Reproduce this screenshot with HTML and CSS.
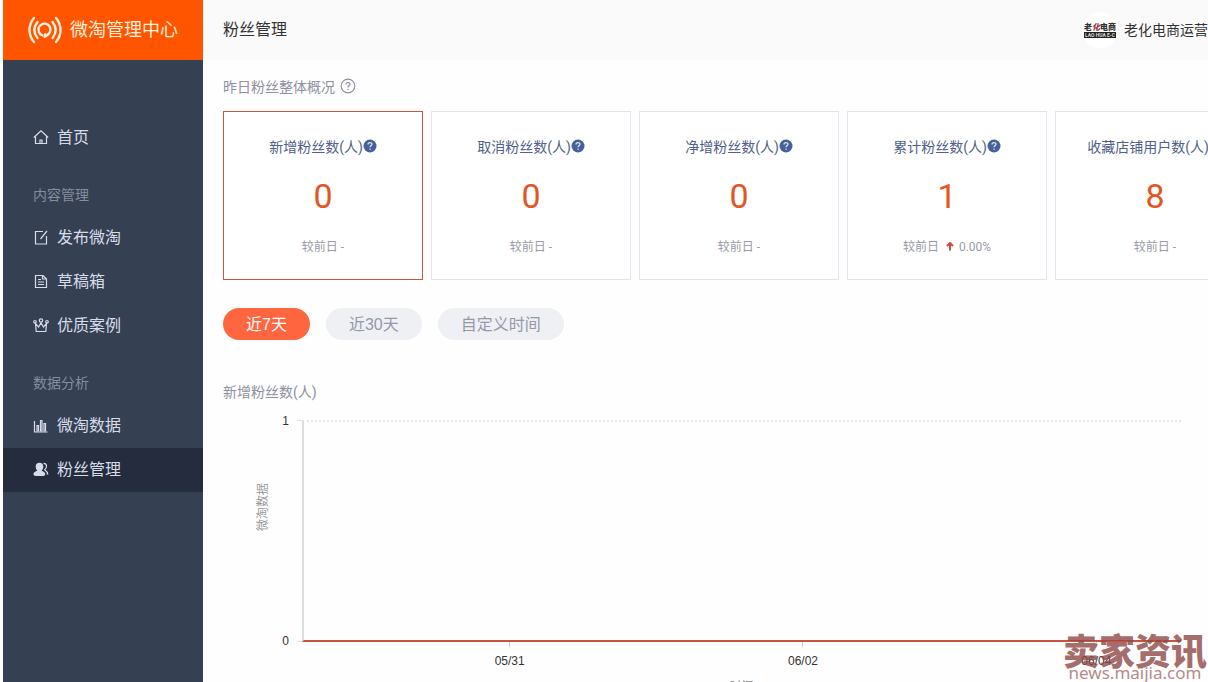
FILE: index.html
```html
<!DOCTYPE html>
<html lang="zh-CN">
<head>
<meta charset="utf-8">
<title>粉丝管理</title>
<link rel="stylesheet" href="styles.css">
</head>
<body>
<div class="page">
  <aside class="sidebar">
    <div class="brand">
      <svg class="brand-icon" viewBox="0 0 34 28" fill="none" stroke="currentColor" stroke-width="2.4" stroke-linecap="round">
        <path d="M6 2C0 9 0 19 6 26M28 2c6 7 6 17 0 24M9.500 6C5.500 11 5.500 17 9.500 22M24.500 6c4 5 4 11 0 16"/>
        <path d="M14.500 19.300a6 6 0 1 1 6.500-1.800c-1 1.500-2.500 2.500-4 3l.3-2.200"/>
      </svg>
      <span>微淘管理中心</span>
    </div>
    <nav class="menu">
      <a class="item" href="#">
        <svg class="icon" viewBox="0 0 16 16"><path d="M.8 7.500 8 .8l7.200 6.700M2.500 6.500v7h11v-7"/><path d="M7 13.500V10h2v3.500"/></svg>
        <span>首页</span>
      </a>
      <h2 class="group">内容管理</h2>
      <a class="item" href="#">
        <svg class="icon" viewBox="0 0 16 16"><path d="M10 1.500H2.500v12.500h11V6M7.500 9 14 1"/></svg>
        <span>发布微淘</span>
      </a>
      <a class="item" href="#">
        <svg class="icon" viewBox="0 0 16 16"><path d="M2.500 1.500h7.500l3.500 3.500v8.500h-11zM9.500 1.500V5h4M5 5.500h3M5 8h6M5 10.500h6"/></svg>
        <span>草稿箱</span>
      </a>
      <a class="item" href="#">
        <svg class="icon" viewBox="0 0 16 16"><path d="M2.500 5.500 3.200 13.500h9.600l.7-8-3 3.500L8 5 5.500 9z"/><circle cx="2" cy="3.800" r="1.300"/><circle cx="8" cy="2.500" r="1.700"/><circle cx="14" cy="3.800" r="1.300"/></svg>
        <span>优质案例</span>
      </a>
      <h2 class="group">数据分析</h2>
      <a class="item" href="#">
        <svg class="icon" viewBox="0 0 16 16"><path d="M1.500 3v11h13"/><path d="M4 7.500h1.500V13H4zM7.500 2.500H9V13H7.500zM11 5.500h1.500V13H11z"/></svg>
        <span>微淘数据</span>
      </a>
      <a class="item active" href="#">
        <svg class="icon" viewBox="0 0 16 16"><path class="solid" d="M6.500.8c2.700 0 4 1.800 3.800 4.200-.1 1.600-.8 2.600-1.500 3.300 0 1.200 3.400 1.300 3.400 3.900 0 1.500-1.500 1.900-5.700 1.900S.5 13.700.5 12.200c0-2.600 3.600-2.700 3.600-3.900C3.400 7.600 2.800 6.600 2.700 5 2.500 2.600 3.800.8 6.500.8z"/><path d="M10.500 1.300c4 0 3.600 4.700 1.200 6.500 2 1.500 3 2 3 4.200h-1.200"/></svg>
        <span>粉丝管理</span>
      </a>
    </nav>
  </aside>

  <main class="main">
    <header class="topbar">
      <h1 class="title">粉丝管理</h1>
      <div class="user">
        <div class="avatar">
          <span class="avatar-name">老<i>化</i>电商</span>
          <span class="avatar-band">LAO HUA E-C</span>
        </div>
        <span>老化电商运营</span>
      </div>
    </header>

    <div class="content">
      <div class="section-title">
        <span>昨日粉丝整体概况</span>
        <svg class="help-outline" viewBox="0 0 16 16"><circle cx="8" cy="7" r="6.800"/><path d="M6 5.500c0-2.700 4-2.600 4-.2C10 6.800 8 6.700 8 8.500M8 9.800v1.200"/></svg>
      </div>

      <section class="cards">
        <article class="card selected">
          <h3 class="card-title">新增粉丝数(人)<svg class="help" viewBox="0 0 14 16"><circle cx="7" cy="7" r="6.500"/><path d="M5 5.500c0-2.500 4-2.400 4-.2C9 6.700 7 6.600 7 8.300M7 9.500v1.300"/></svg></h3>
          <div class="value">0</div>
          <div class="delta">较前日 -</div>
        </article>
        <article class="card">
          <h3 class="card-title">取消粉丝数(人)<svg class="help" viewBox="0 0 14 16"><circle cx="7" cy="7" r="6.500"/><path d="M5 5.500c0-2.500 4-2.400 4-.2C9 6.700 7 6.600 7 8.300M7 9.500v1.300"/></svg></h3>
          <div class="value">0</div>
          <div class="delta">较前日 -</div>
        </article>
        <article class="card">
          <h3 class="card-title">净增粉丝数(人)<svg class="help" viewBox="0 0 14 16"><circle cx="7" cy="7" r="6.500"/><path d="M5 5.500c0-2.500 4-2.400 4-.2C9 6.700 7 6.600 7 8.300M7 9.500v1.300"/></svg></h3>
          <div class="value">0</div>
          <div class="delta">较前日 -</div>
        </article>
        <article class="card">
          <h3 class="card-title">累计粉丝数(人)<svg class="help" viewBox="0 0 14 16"><circle cx="7" cy="7" r="6.500"/><path d="M5 5.500c0-2.500 4-2.400 4-.2C9 6.700 7 6.600 7 8.300M7 9.500v1.300"/></svg></h3>
          <div class="value">1</div>
          <div class="delta">较前日<svg class="up" viewBox="0 0 8 10"><path d="M4 8.500V1M1 4l3-3 3 3"/></svg>0.00%</div>
        </article>
        <article class="card">
          <h3 class="card-title">收藏店铺用户数(人)<svg class="help" viewBox="0 0 14 16"><circle cx="7" cy="7" r="6.500"/><path d="M5 5.500c0-2.500 4-2.400 4-.2C9 6.700 7 6.600 7 8.300M7 9.500v1.300"/></svg></h3>
          <div class="value">8</div>
          <div class="delta">较前日 -</div>
        </article>
      </section>

      <div class="ranges">
        <button class="range on" type="button">近7天</button>
        <button class="range" type="button">近30天</button>
        <button class="range" type="button">自定义时间</button>
      </div>

      <h3 class="chart-title">新增粉丝数(人)</h3>
      <div class="chart">
        <div class="y-axis">
          <span class="y-name">微淘数据</span>
          <div class="y-labels"><span>1</span><span>0</span></div>
          <div class="y-ticks"></div>
        </div>
        <div class="plot"></div>
        <div class="x-axis">
          <div class="x-labels"><span>05/31</span><span>06/02</span><span>06/04</span></div>
          <div class="x-name">时间</div>
        </div>
      </div>
    </div>
  </main>

  <div class="watermark">
    <strong>卖家资讯</strong>
    <span>news.maijia.com</span>
  </div>
</div>
</body>
</html>
```
FILE: styles.css
```css
* { box-sizing: border-box; }

body {
  margin: 0;
  overflow: hidden;
  background: #fefefe;
  font-family: Roboto, "Noto Sans CJK SC", sans-serif;
  font-size: 14px;
  line-height: 20px;
  color: #333;
}

h1, h2, h3 { margin: 0; font-weight: 400; }

.page {
  position: relative;
  display: flex;
  height: 100vh;
  padding-left: 3px;
  overflow: hidden;
}

/* Sidebar */
.sidebar { flex: 0 0 200px; background: #354052; }

.brand {
  display: flex;
  align-items: center;
  gap: 8px;
  height: 60px;
  padding-left: 25px;
  background: #ff5500;
  color: #fff0dc;
  font-size: 18px;
}
.brand-icon { width: 34px; height: 28px; }

.menu { padding-top: 56px; }

.item {
  display: flex;
  align-items: center;
  gap: 8px;
  height: 44px;
  padding-left: 30px;
  color: #d8dcea;
  font-size: 16px;
  text-decoration: none;
}
.item.active { background: #242c3e; }

.icon {
  width: 16px;
  height: 16px;
  fill: none;
  stroke: currentColor;
  stroke-width: 1.2;
}
.icon .solid { fill: currentColor; stroke: none; }

.group {
  padding: 25px 0 11px 30px;
  font-size: 14px;
  line-height: 20px;
  color: #858d9e;
}

/* Main column */
.main { flex: 1; min-width: 0; overflow: hidden; }

.topbar {
  display: flex;
  align-items: center;
  justify-content: space-between;
  height: 60px;
  padding-left: 20px;
  background: #fafafa;
}
.title { font-size: 16px; }

.user { display: flex; align-items: center; gap: 6px; white-space: nowrap; }

.avatar {
  display: flex;
  flex-direction: column;
  align-items: center;
  justify-content: center;
  width: 36px;
  height: 36px;
  border-radius: 50%;
  background: #fff;
}
.avatar-name { font-size: 8px; font-weight: 900; line-height: 9px; color: #333; }
.avatar-name i { color: #9b3a3f; }
.avatar-band {
  padding: 0 1px;
  background: #222;
  color: #ddd;
  font-size: 5px;
  font-weight: 700;
  line-height: 6px;
}

.content { padding: 17px 0 0 20px; }

.section-title {
  display: flex;
  align-items: center;
  gap: 5px;
  margin-bottom: 14px;
  color: #8e90a2;
}
.help-outline {
  width: 16px;
  height: 16px;
  overflow: visible;
  fill: none;
  stroke: currentColor;
  stroke-width: 1.2;
}

/* Summary cards */
.cards { display: flex; gap: 8px; }

.card {
  flex: 0 0 200px;
  padding: 25px 0 22px;
  border: 1px solid #e2e6ea;
  background: #fff;
  text-align: center;
  white-space: nowrap;
}
.card.selected { border-color: #c5593c; }

.card-title {
  display: flex;
  align-items: center;
  justify-content: center;
  font-size: 14px;
  line-height: 20px;
  color: #4f618c;
}
.help { width: 14px; height: 16px; fill: #45609a; }
.help path { fill: none; stroke: #dbe4f5; stroke-width: 1.3; }

.value {
  margin: 19px 0 21px;
  font-size: 34px;
  line-height: 40px;
  color: #e4561f;
}

.delta {
  display: flex;
  align-items: center;
  justify-content: center;
  font-size: 12px;
  line-height: 20px;
  color: #999ba5;
  white-space: pre;
}
.up {
  width: 8px;
  height: 10px;
  margin: 0 5px 0 7px;
  fill: none;
  stroke: #d6473c;
  stroke-width: 2;
}

/* Range buttons */
.ranges { display: flex; gap: 16px; margin-top: 28px; }

.range {
  height: 32px;
  padding: 0 23px 2px;
  border: 0;
  border-radius: 16px;
  background: #eff0f4;
  color: #9698aa;
  font-family: "Liberation Sans", "Noto Sans CJK SC", sans-serif;
  font-size: 16px;
}
.range.on { background: #ff6640; color: #fff; }

/* Chart */
.chart-title {
  margin: 42px 0 18px;
  font-size: 14px;
  line-height: 20px;
  color: #8e90a2;
}

.chart {
  display: grid;
  grid-template-columns: 79px 1fr;
  padding-right: 27px;
  font-family: "Liberation Sans", "Noto Sans CJK SC", sans-serif;
  font-size: 12px;
}

.y-axis { display: flex; padding-left: 30px; }
.y-name {
  width: 20px;
  margin-top: 63px;
  writing-mode: vertical-rl;
  text-orientation: sideways;
  transform: rotate(180deg);
  text-align: right;
  color: #999;
}
.y-labels {
  display: flex;
  flex: 1;
  flex-direction: column;
  justify-content: space-between;
  margin: -9px 8px;
  text-align: right;
}
.y-ticks { width: 5px; border-top: 1px solid #e0e0e0; border-bottom: 1px solid #e0e0e0; }

.plot {
  height: 222px;
  border-top: 2px dotted #e6e6e6;
  border-left: 2px solid #ddd;
  border-bottom: 2px solid #cb5140;
}

.x-axis { grid-column: 2; }
.x-labels {
  display: grid;
  grid-template-columns: repeat(3, 1fr);
  width: calc(100% + 62px);
  padding-left: 61px;
  text-align: center;
}
.x-labels span::before {
  content: "";
  display: block;
  width: 1px;
  height: 5px;
  margin: 0 auto 4px;
  background: #ccc;
}
.x-name { margin-top: 6px; text-align: center; color: #888; }

/* Watermark over the lower right corner */
.watermark {
  position: absolute;
  right: 1px;
  bottom: 0;
  display: flex;
  flex-direction: column;
  align-items: center;
  color: #904a48;
  opacity: 0.8;
}
.watermark strong {
  font-family: "Noto Sans CJK SC", sans-serif;
  font-size: 36px;
  font-weight: 900;
  line-height: 30px;
}
.watermark span {
  font-family: "Noto Sans", sans-serif;
  font-size: 17px;
  line-height: 18px;
  opacity: 0.8;
}
```
